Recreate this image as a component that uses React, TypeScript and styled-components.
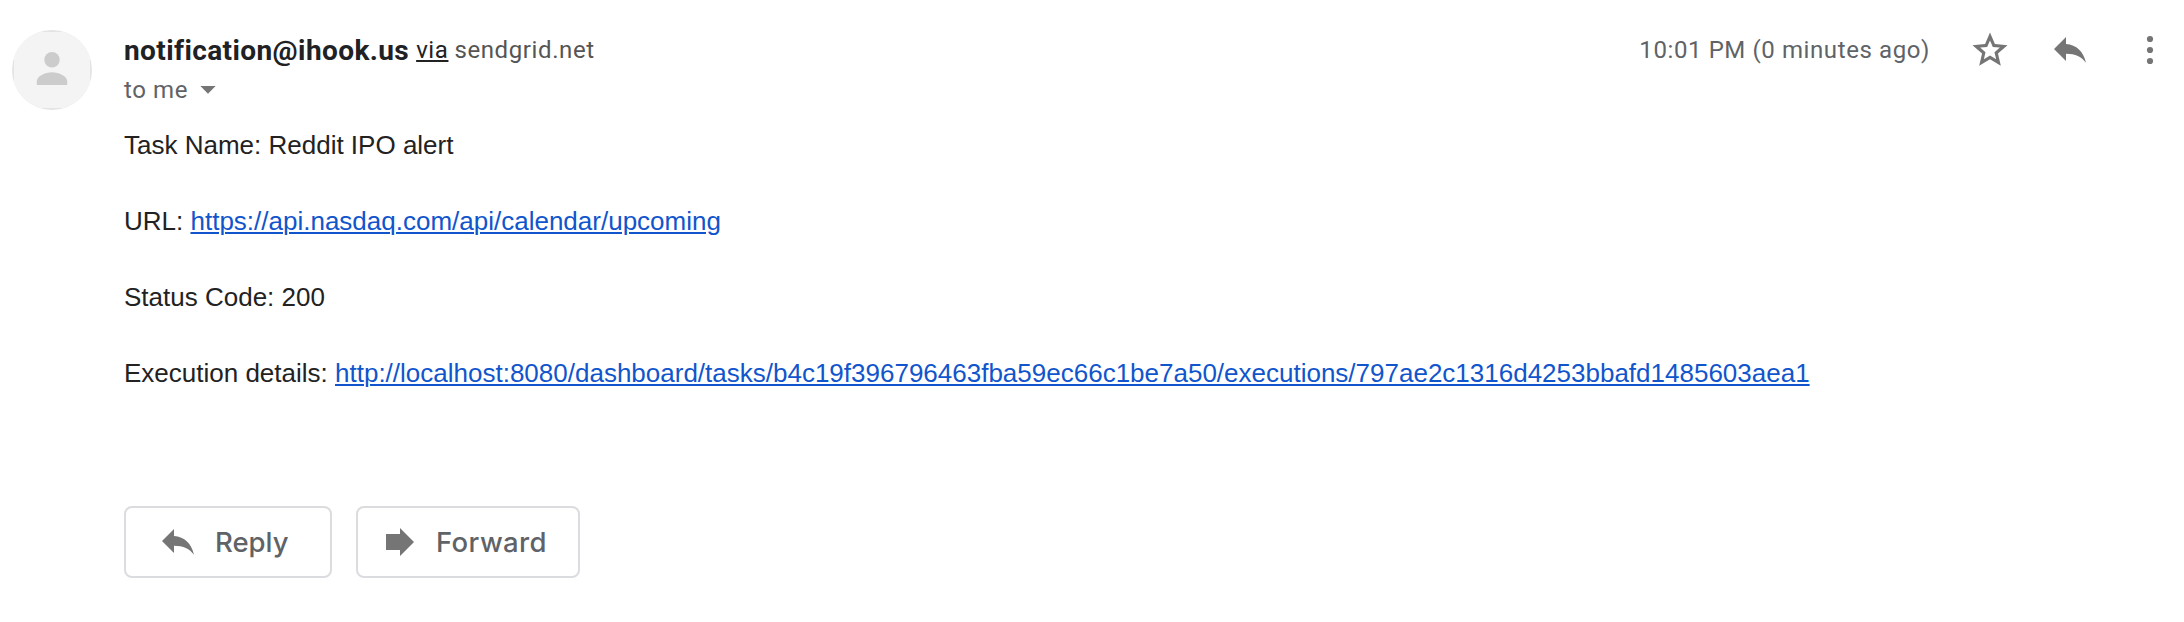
import React from 'react';
import styled, { createGlobalStyle } from 'styled-components';

const GlobalStyle = createGlobalStyle`
  *, *::before, *::after { box-sizing: border-box; }
  body { margin: 0; background: #fff; }
`;

const Message = styled.article`
  display: grid;
  grid-template-columns: 80px minmax(0, 1fr);
  column-gap: 32px;
  width: 100%;
  min-height: 622px;
  padding: 30px 30px 0 12px;
  font-family: Roboto, 'Liberation Sans', sans-serif;
  color: #202124;
`;

const Avatar = styled.div`
  width: 80px;
  height: 80px;
  border-radius: 50%;
  overflow: hidden;

  svg { display: block; }
`;

const Content = styled.div`
  min-width: 0;
`;

const Header = styled.header`
  display: flex;
  justify-content: space-between;
  height: 80px;
`;

const Sender = styled.div`
  display: flex;
  flex-direction: column;
`;

const SenderLine = styled.div`
  display: flex;
  align-items: flex-start;
  height: 40px;
  white-space: pre;
`;

const SenderName = styled.span`
  font-size: 28px;
  font-weight: 700;
  line-height: 42px;
  letter-spacing: 0.4px;
`;

const Small = styled.span<{ $color?: string; $gap?: number }>`
  margin-left: ${(p) => p.$gap ?? 0}px;
  font-size: 24px;
  line-height: 40px;
  letter-spacing: 0.6px;
  color: ${(p) => p.$color ?? '#5f6368'};
`;

const ViaLink = styled.a`
  margin-left: 7px;
  font-size: 24px;
  line-height: 40px;
  letter-spacing: 0.6px;
  color: #222;
  text-decoration: underline;
  text-decoration-thickness: 2px;
  text-underline-offset: 2px;
`;

const Recipient = styled.div`
  display: flex;
  align-items: center;
  gap: 12px;
  height: 40px;
`;

const Actions = styled.div`
  display: flex;
  align-items: center;
  height: 40px;
`;

const IconButton = styled.button<{ $width: number; $ml: number }>`
  display: flex;
  align-items: center;
  justify-content: center;
  width: ${(p) => p.$width}px;
  height: 42px;
  margin: 0 0 0 ${(p) => p.$ml}px;
  padding: 0;
  border: 0;
  background: none;
  color: #757575;
`;

const Body = styled.div`
  padding-top: 16px;
  font-family: 'Liberation Sans', Arial, sans-serif;
  font-size: 26px;
  line-height: 38px;
  color: #222;
`;

const Line = styled.p`
  margin: 0 0 38px;
  white-space: nowrap;
`;

const Link = styled.a`
  color: #1155cc;
  text-decoration: underline;
  text-decoration-thickness: 2px;
  text-underline-offset: 2px;
`;

const Footer = styled.footer`
  display: flex;
  gap: 24px;
  padding-top: 76px;
`;

const ActionButton = styled.button<{ $width: number; $pad: number; $gap: number; $tracking: number }>`
  display: flex;
  align-items: center;
  gap: ${(p) => p.$gap}px;
  width: ${(p) => p.$width}px;
  height: 72px;
  padding: 0 0 0 ${(p) => p.$pad}px;
  border: 2px solid #dadce0;
  border-radius: 8px;
  background: #fff;
  color: #5f6368;
  font-family: Inter, Roboto, sans-serif;
  font-size: 27.5px;
  font-weight: 500;
  line-height: 40px;
  letter-spacing: ${(p) => p.$tracking}px;

  svg { flex: none; color: #757575; }
`;

const PersonIcon = () => (
  <svg width="80" height="80" viewBox="0 0 80 80">
    <rect width="80" height="80" fill="#e4e4e4" />
    <rect x="2" y="2" width="76" height="76" fill="#f4f4f4" />
    <circle cx="40" cy="29.7" r="7.7" fill="#ccc" />
    <path d="M24.8 55v-3.6c0-5.2 8.2-9.2 15.2-9.2s15.2 4 15.2 9.2V55z" fill="#ccc" />
  </svg>
);

const CaretIcon = () => (
  <svg width="16" height="8" viewBox="0 0 16 8">
    <path d="M.4 0h15.2L8 7.8z" fill="#757575" />
  </svg>
);

const StarIcon = () => (
  <svg width="42" height="42" viewBox="0 0 24 24" fill="currentColor" fillRule="evenodd">
    <path d="M22 9.24l-7.19-.62L12 2 9.19 8.63 2 9.24l5.46 4.73L5.82 21 12 17.27 18.18 21l-1.63-7.03zM12 6.5l1.6 3.78 4.05.36-3.08 2.67.93 3.99L12 15.2l-3.5 2.1.93-3.99-3.08-2.67 4.05-.36z" />
  </svg>
);

const ReplyIcon = () => (
  <svg width="32" height="26" viewBox="0 0 32 26" fill="currentColor">
    <path d="M0 12L12 0v7.1C22.5 8 29.5 14.5 32 25.8C27.5 19.5 21.5 16.7 12 16.7V24z" />
  </svg>
);

const MoreIcon = () => (
  <svg width="8" height="30" viewBox="0 0 8 30" fill="currentColor">
    <circle cx="4" cy="4" r="3.1" />
    <circle cx="4" cy="15" r="3.1" />
    <circle cx="4" cy="26" r="3.1" />
  </svg>
);

const ForwardIcon = () => (
  <svg width="28" height="28" viewBox="0 0 28 28" fill="currentColor">
    <path d="M0 6h14V0l14 14-14 14v-6H0z" />
  </svg>
);

export default function App() {
  return (
    <>
      <GlobalStyle />
      <Message>
        <Avatar>
          <PersonIcon />
        </Avatar>
        <Content>
          <Header>
            <Sender>
              <SenderLine>
                <SenderName>notification@ihook.us</SenderName>
                <ViaLink>via</ViaLink>
                <Small $color="#555" $gap={6}>sendgrid.net</Small>
              </SenderLine>
              <Recipient>
                <Small>to me</Small>
                <CaretIcon />
              </Recipient>
            </Sender>
            <Actions>
              <Small>10:01 PM (0 minutes ago)</Small>
              <IconButton $width={42} $ml={39} aria-label="Star">
                <StarIcon />
              </IconButton>
              <IconButton $width={32} $ml={43} aria-label="Reply">
                <ReplyIcon />
              </IconButton>
              <IconButton $width={8} $ml={60} aria-label="More">
                <MoreIcon />
              </IconButton>
            </Actions>
          </Header>
          <Body>
            <Line>Task Name: Reddit IPO alert</Line>
            <Line>
              URL: <Link>https://api.nasdaq.com/api/calendar/upcoming</Link>
            </Line>
            <Line>Status Code: 200</Line>
            <Line>
              Execution details:{' '}
              <Link>
                http://localhost:8080/dashboard/tasks/b4c19f396796463fba59ec66c1be7a50/executions/797ae2c1316d4253bbafd1485603aea1
              </Link>
            </Line>
          </Body>
          <Footer>
            <ActionButton $width={208} $pad={36} $gap={21} $tracking={0}>
              <ReplyIcon />
              Reply
            </ActionButton>
            <ActionButton $width={224} $pad={28} $gap={22} $tracking={0.4}>
              <ForwardIcon />
              Forward
            </ActionButton>
          </Footer>
        </Content>
      </Message>
    </>
  );
}
